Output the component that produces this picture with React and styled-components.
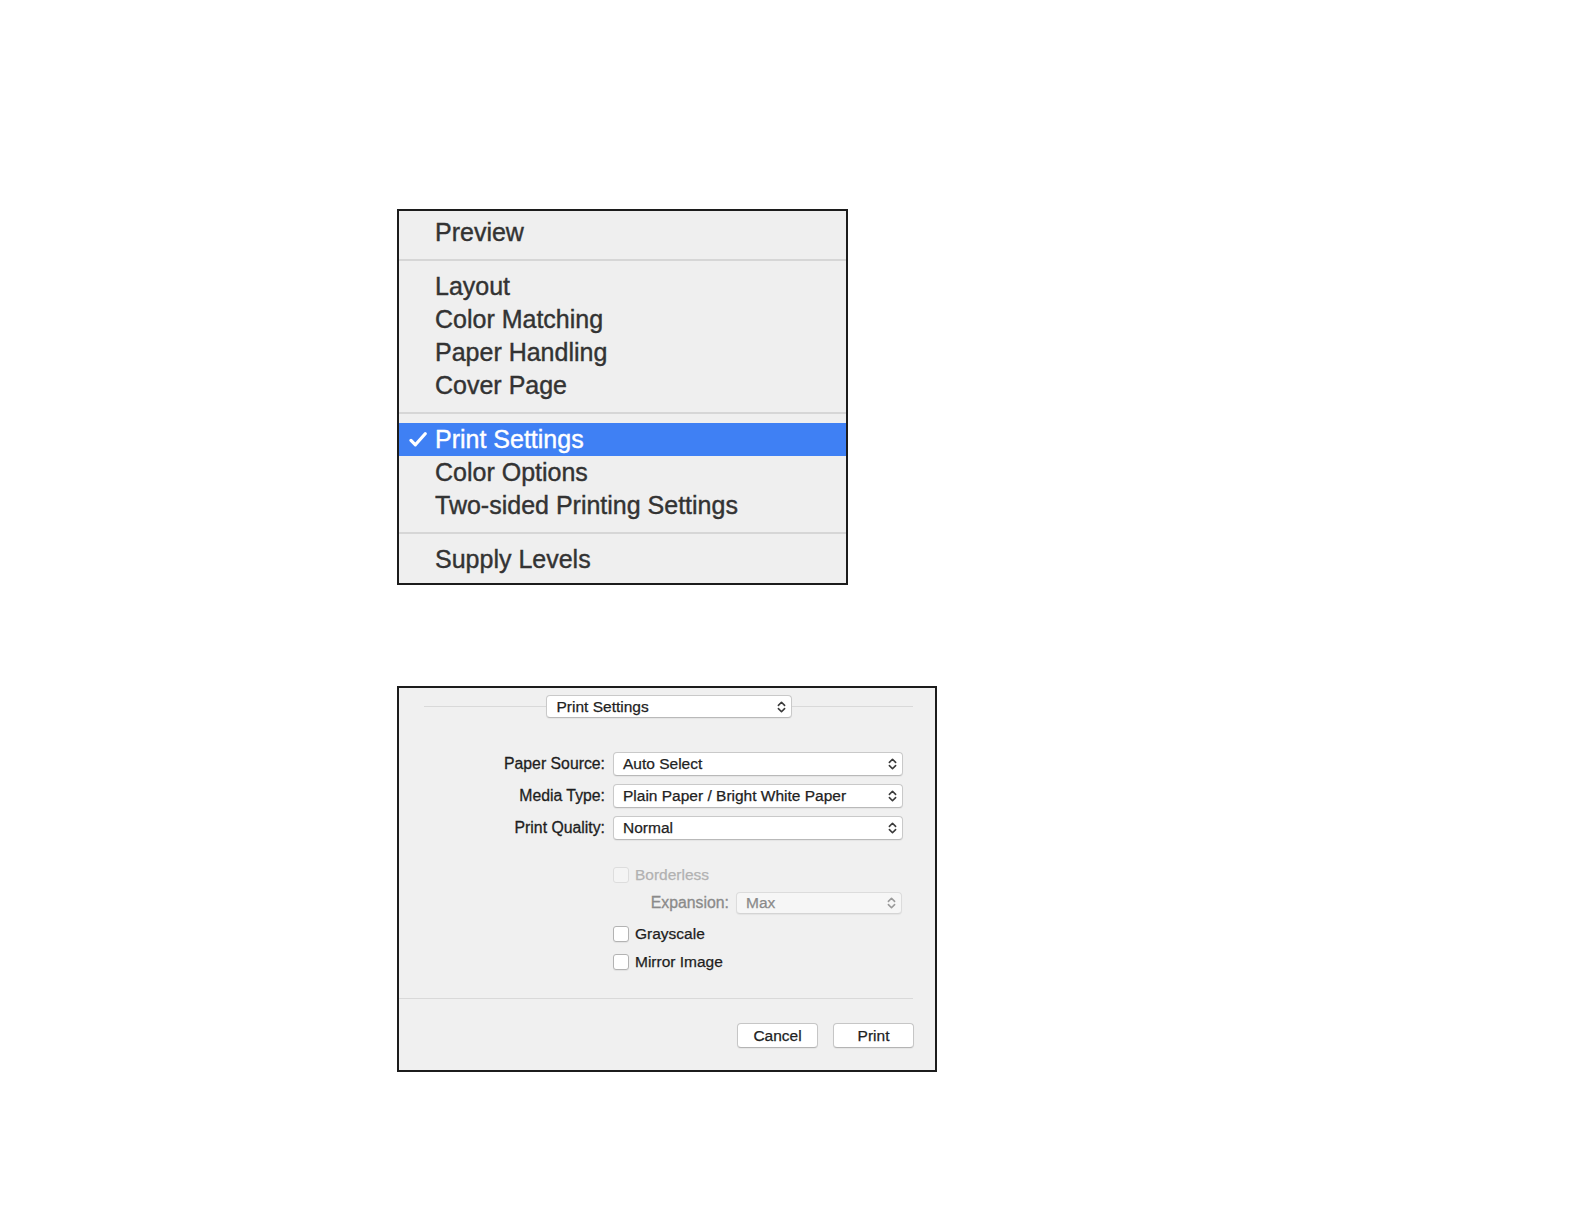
import React from "react";
import styled, { createGlobalStyle } from "styled-components";

const GlobalStyle = createGlobalStyle`
  html, body {
    margin: 0;
    padding: 0;
    background: #ffffff;
  }
  body {
    font-family: "Liberation Sans", Arial, Helvetica, sans-serif;
  }
`;

const Page = styled.div`
  display: flex;
  flex-direction: column;
  align-items: flex-start;
  gap: 101px;
  padding: 209px 0 120px 397px;
`;

/* ---------- popup menu ---------- */

const Menu = styled.div`
  width: 447px;
  border: 2px solid #1c1c1c;
  background: #efefef;
  padding: 5px 0 7px;
  display: flex;
  flex-direction: column;
`;

const MenuItem = styled.div`
  display: flex;
  align-items: center;
  height: 33px;
  font-size: 25px;
  -webkit-text-stroke: 0.4px currentColor;
  color: ${(p) => (p.$selected ? "#ffffff" : "#333333")};
  background: ${(p) => (p.$selected ? "#3f80f4" : "transparent")};
  white-space: nowrap;
`;

const CheckSlot = styled.span`
  width: 36px;
  display: flex;
  justify-content: center;
  align-items: center;
  padding-left: 1px;
  box-sizing: border-box;
`;

const MenuSeparator = styled.div`
  padding: 10px 0 9px;

  &::before {
    content: "";
    display: block;
    height: 2px;
    background: #d6d6d6;
  }
`;

const Check = () => (
  <svg width="18" height="15" viewBox="0 0 18 15">
    <path
      d="M2 8.4 L6.4 12.8 L16.2 1.8"
      fill="none"
      stroke="#ffffff"
      strokeWidth="3.2"
      strokeLinecap="round"
      strokeLinejoin="round"
    />
  </svg>
);

const menuGroups = [
  [{ label: "Preview" }],
  [
    { label: "Layout" },
    { label: "Color Matching" },
    { label: "Paper Handling" },
    { label: "Cover Page" },
  ],
  [
    { label: "Print Settings", selected: true },
    { label: "Color Options" },
    { label: "Two-sided Printing Settings" },
  ],
  [{ label: "Supply Levels" }],
];

/* ---------- print dialog ---------- */

const Dialog = styled.div`
  width: 536px;
  border: 2px solid #1c1c1c;
  background: #f0f0f0;
  display: flex;
  flex-direction: column;
  padding: 7px 0 22px;
`;

const Header = styled.div`
  display: flex;
  align-items: center;
  margin: 0 22px 0 25px;
`;

const HeaderLine = styled.div`
  flex: 1;
  height: 1px;
  background: #d9d9d9;
`;

const Popup = styled.div`
  display: flex;
  align-items: center;
  justify-content: space-between;
  box-sizing: border-box;
  width: ${(p) => p.$width}px;
  height: ${(p) => p.$height || 24}px;
  padding: 0 5px 0 ${(p) => p.$pad || 9}px;
  background: ${(p) => (p.$disabled ? "#f6f6f6" : "#ffffff")};
  border: 1px solid ${(p) => (p.$disabled ? "#dcdcdc" : "#c9c9c9")};
  border-bottom-color: ${(p) => (p.$disabled ? "#d4d4d4" : "#b9b9b9")};
  border-radius: 4px;
  box-shadow: 0 1px 1px rgba(0, 0, 0, 0.05);
  font-size: 15.5px;
  -webkit-text-stroke: 0.25px currentColor;
  color: ${(p) => (p.$disabled ? "#8a8a8a" : "#222222")};
  white-space: nowrap;
`;

const Chevrons = ({ color = "#3a3a3a" }) => (
  <svg width="9" height="14" viewBox="0 0 9 14">
    <path
      d="M1.4 5.4 L4.5 2.3 L7.6 5.4 M1.4 8.6 L4.5 11.7 L7.6 8.6"
      fill="none"
      stroke={color}
      strokeWidth="1.6"
      strokeLinecap="round"
      strokeLinejoin="round"
    />
  </svg>
);

const Form = styled.div`
  display: grid;
  grid-template-columns: 206px 290px;
  column-gap: 8px;
  row-gap: 8px;
  align-items: center;
  margin-top: 34px;
`;

const Label = styled.div`
  text-align: right;
  font-size: 15.8px;
  -webkit-text-stroke: 0.3px currentColor;
  color: ${(p) => (p.$disabled ? "#8a8a8a" : "#1e1e1e")};
  white-space: nowrap;
`;

const Options = styled.div`
  display: flex;
  flex-direction: column;
  margin: 25px 0 0 214px;
  width: 290px;
`;

const CheckRow = styled.label`
  display: flex;
  align-items: center;
  gap: 6px;
  height: 20px;
  margin-top: ${(p) => p.$gap || 0}px;
  font-size: 15.5px;
  -webkit-text-stroke: 0.25px currentColor;
  color: ${(p) => (p.$disabled ? "#b2b2b2" : "#1e1e1e")};
  white-space: nowrap;
`;

const Box = styled.span`
  width: 16px;
  height: 16px;
  box-sizing: border-box;
  border-radius: 3px;
  background: ${(p) => (p.$disabled ? "#f4f4f4" : "#ffffff")};
  border: 1px solid ${(p) => (p.$disabled ? "#dddddd" : "#b3b3b3")};
  box-shadow: ${(p) => (p.$disabled ? "none" : "0 1px 1px rgba(0,0,0,0.06)")};
`;

const ExpansionRow = styled.div`
  display: flex;
  align-items: center;
  justify-content: flex-end;
  gap: 7px;
  margin-top: 7px;
  padding-right: 1px;
`;

const FooterLine = styled.div`
  height: 1px;
  background: #d9d9d9;
  margin: 26px 22px 0 0;
`;

const Buttons = styled.div`
  display: flex;
  justify-content: flex-end;
  gap: 15px;
  margin: 24px 21px 0 0;
`;

const Button = styled.button`
  width: 81px;
  height: 25px;
  padding: 0;
  background: #ffffff;
  border: 1px solid #c6c6c6;
  border-bottom-color: #b4b4b4;
  border-radius: 4px;
  box-shadow: 0 1px 1px rgba(0, 0, 0, 0.05);
  font-family: inherit;
  font-size: 15.5px;
  -webkit-text-stroke: 0.25px currentColor;
  color: #222222;
`;

const selects = [
  { label: "Paper Source:", value: "Auto Select" },
  { label: "Media Type:", value: "Plain Paper / Bright White Paper" },
  { label: "Print Quality:", value: "Normal" },
];

export default function App() {
  return (
    <>
      <GlobalStyle />
      <Page>
        <Menu>
          {menuGroups.map((group, gi) => (
            <React.Fragment key={gi}>
              {gi > 0 && <MenuSeparator />}
              {group.map((item) => (
                <MenuItem key={item.label} $selected={item.selected}>
                  <CheckSlot>{item.selected && <Check />}</CheckSlot>
                  {item.label}
                </MenuItem>
              ))}
            </React.Fragment>
          ))}
        </Menu>

        <Dialog>
          <Header>
            <HeaderLine />
            <Popup $width={246} $height={23} $pad={10}>
              Print Settings
              <Chevrons />
            </Popup>
            <HeaderLine />
          </Header>

          <Form>
            {selects.map((s) => (
              <React.Fragment key={s.label}>
                <Label>{s.label}</Label>
                <Popup $width={290}>
                  {s.value}
                  <Chevrons />
                </Popup>
              </React.Fragment>
            ))}
          </Form>

          <Options>
            <CheckRow $disabled>
              <Box $disabled />
              Borderless
            </CheckRow>
            <ExpansionRow>
              <Label $disabled>Expansion:</Label>
              <Popup $width={166} $height={22} $disabled>
                Max
                <Chevrons color="#9a9a9a" />
              </Popup>
            </ExpansionRow>
            <CheckRow $gap={10}>
              <Box />
              Grayscale
            </CheckRow>
            <CheckRow $gap={8}>
              <Box />
              Mirror Image
            </CheckRow>
          </Options>

          <FooterLine />

          <Buttons>
            <Button>Cancel</Button>
            <Button>Print</Button>
          </Buttons>
        </Dialog>
      </Page>
    </>
  );
}
